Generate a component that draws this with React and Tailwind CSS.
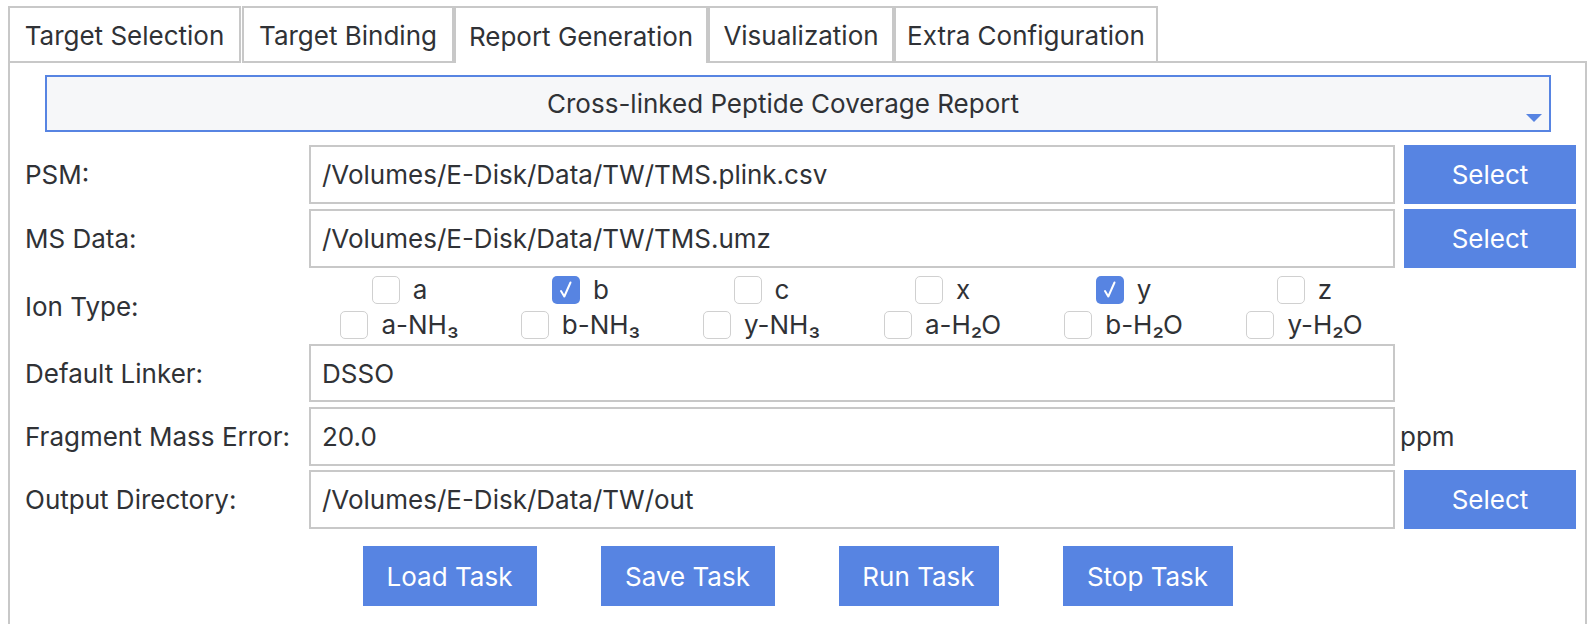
import React from "react";

function Tab({ label, w, active }) {
  return (
    <div
      className={
        "flex items-center justify-center pt-[2px] h-[57px] border-2 border-[#c8c8c8] bg-white " +
        (active ? "border-b-0 border-b-white" : "")
      }
      style={{ width: w }}
    >
      {label}
    </div>
  );
}

function Check({ checked }) {
  if (checked) {
    return (
      <div className="w-[28px] h-[28px] rounded-[5px] bg-[#5784e2] flex items-center justify-center shrink-0">
        <svg width="28" height="28" viewBox="0 0 28 28">
          <path d="M9 15 L12.3 20.5 L18.5 6.5" fill="none" stroke="white" strokeWidth="2" strokeLinecap="round" strokeLinejoin="round" />
        </svg>
      </div>
    );
  }
  return <div className="w-[28px] h-[28px] rounded-[5px] border-[1.5px] border-[#d0d0d0] bg-white shrink-0" />;
}

function CB({ label, checked }) {
  return (
    <div className="flex items-center justify-center gap-[13px]">
      <Check checked={checked} />
      <span className="leading-none">{label}</span>
    </div>
  );
}

function Input({ value }) {
  return (
    <div className="h-full border-2 border-[#c8c8c8] bg-white flex items-center pl-[11px]">
      {value}
    </div>
  );
}

function SelectBtn() {
  return (
    <div className="ml-[9px] w-[172px] h-full bg-[#5784e2] text-white flex items-center justify-center">
      Select
    </div>
  );
}

function Row({ label, h, mt, children, right }) {
  return (
    <div className="grid grid-cols-[299px_1086px_190px]" style={{ height: h, marginTop: mt }}>
      <div className="pl-[15px] flex items-center">{label}</div>
      <div className="h-full">{children}</div>
      <div className="h-full flex items-center">{right}</div>
    </div>
  );
}

export default function App() {
  const row1 = [
    ["a", false],
    ["b", true],
    ["c", false],
    ["x", false],
    ["y", true],
    ["z", false],
  ];
  const row2 = ["a-NH₃", "b-NH₃", "y-NH₃", "a-H₂O", "b-H₂O", "y-H₂O"];
  return (
    <div className="w-[1592px] h-[624px] overflow-hidden bg-white pt-[6px] pl-[8px] pr-[5px] text-[26px] text-[#303236] font-['Inter','Noto_Sans',sans-serif]">
      <div className="flex">
        <Tab label="Target Selection" w={233} />
        <div className="w-[1px]" />
        <Tab label="Target Binding" w={212} />
        <Tab label="Report Generation" w={254} active />
        <Tab label="Visualization" w={186} />
        <Tab label="Extra Configuration" w={264} />
        <div className="flex-1 border-b-2 border-[#c8c8c8]" />
      </div>
      <div className="border-2 border-t-0 border-[#c8c8c8] h-[600px] pt-[12px]">
        <div className="relative ml-[35px] mr-[34px] h-[57px] border-2 border-[#5784e2] bg-[#f6f7f9] flex items-center justify-center pr-[30px]">
          Cross-linked Peptide Coverage Report
          <svg className="absolute right-[7px] bottom-[8px]" width="16" height="8" viewBox="0 0 16 8">
            <path d="M0 0 L16 0 L8 8 Z" fill="#5784e2" />
          </svg>
        </div>

        <Row label="PSM:" h={59} mt={13} right={<SelectBtn />}>
          <Input value="/Volumes/E-Disk/Data/TW/TMS.plink.csv" />
        </Row>
        <Row label="MS Data:" h={59} mt={5} right={<SelectBtn />}>
          <Input value="/Volumes/E-Disk/Data/TW/TMS.umz" />
        </Row>
        <Row label="Ion Type:" h={76} mt={0}>
          <div className="pt-[7px] flex flex-col gap-[6px]">
            <div className="grid grid-cols-6 h-[29px]">
              {row1.map(([l, c]) => (
                <CB key={l} label={l} checked={c} />
              ))}
            </div>
            <div className="grid grid-cols-6 h-[29px]">
              {row2.map((l) => (
                <CB key={l} label={l} />
              ))}
            </div>
          </div>
        </Row>
        <Row label="Default Linker:" h={58} mt={0}>
          <Input value="DSSO" />
        </Row>
        <Row label="Fragment Mass Error:" h={59} mt={5} right={<span className="pl-[5px]">ppm</span>}>
          <Input value="20.0" />
        </Row>
        <Row label="Output Directory:" h={59} mt={4} right={<SelectBtn />}>
          <Input value="/Volumes/E-Disk/Data/TW/out" />
        </Row>

        <div className="mt-[17px] flex justify-center gap-[64px] text-white">
          <div className="w-[174px] h-[60px] bg-[#5784e2] flex items-center justify-center">Load Task</div>
          <div className="w-[174px] h-[60px] bg-[#5784e2] flex items-center justify-center">Save Task</div>
          <div className="w-[160px] h-[60px] bg-[#5784e2] flex items-center justify-center">Run Task</div>
          <div className="w-[170px] h-[60px] bg-[#5784e2] flex items-center justify-center">Stop Task</div>
        </div>
      </div>
    </div>
  );
}
